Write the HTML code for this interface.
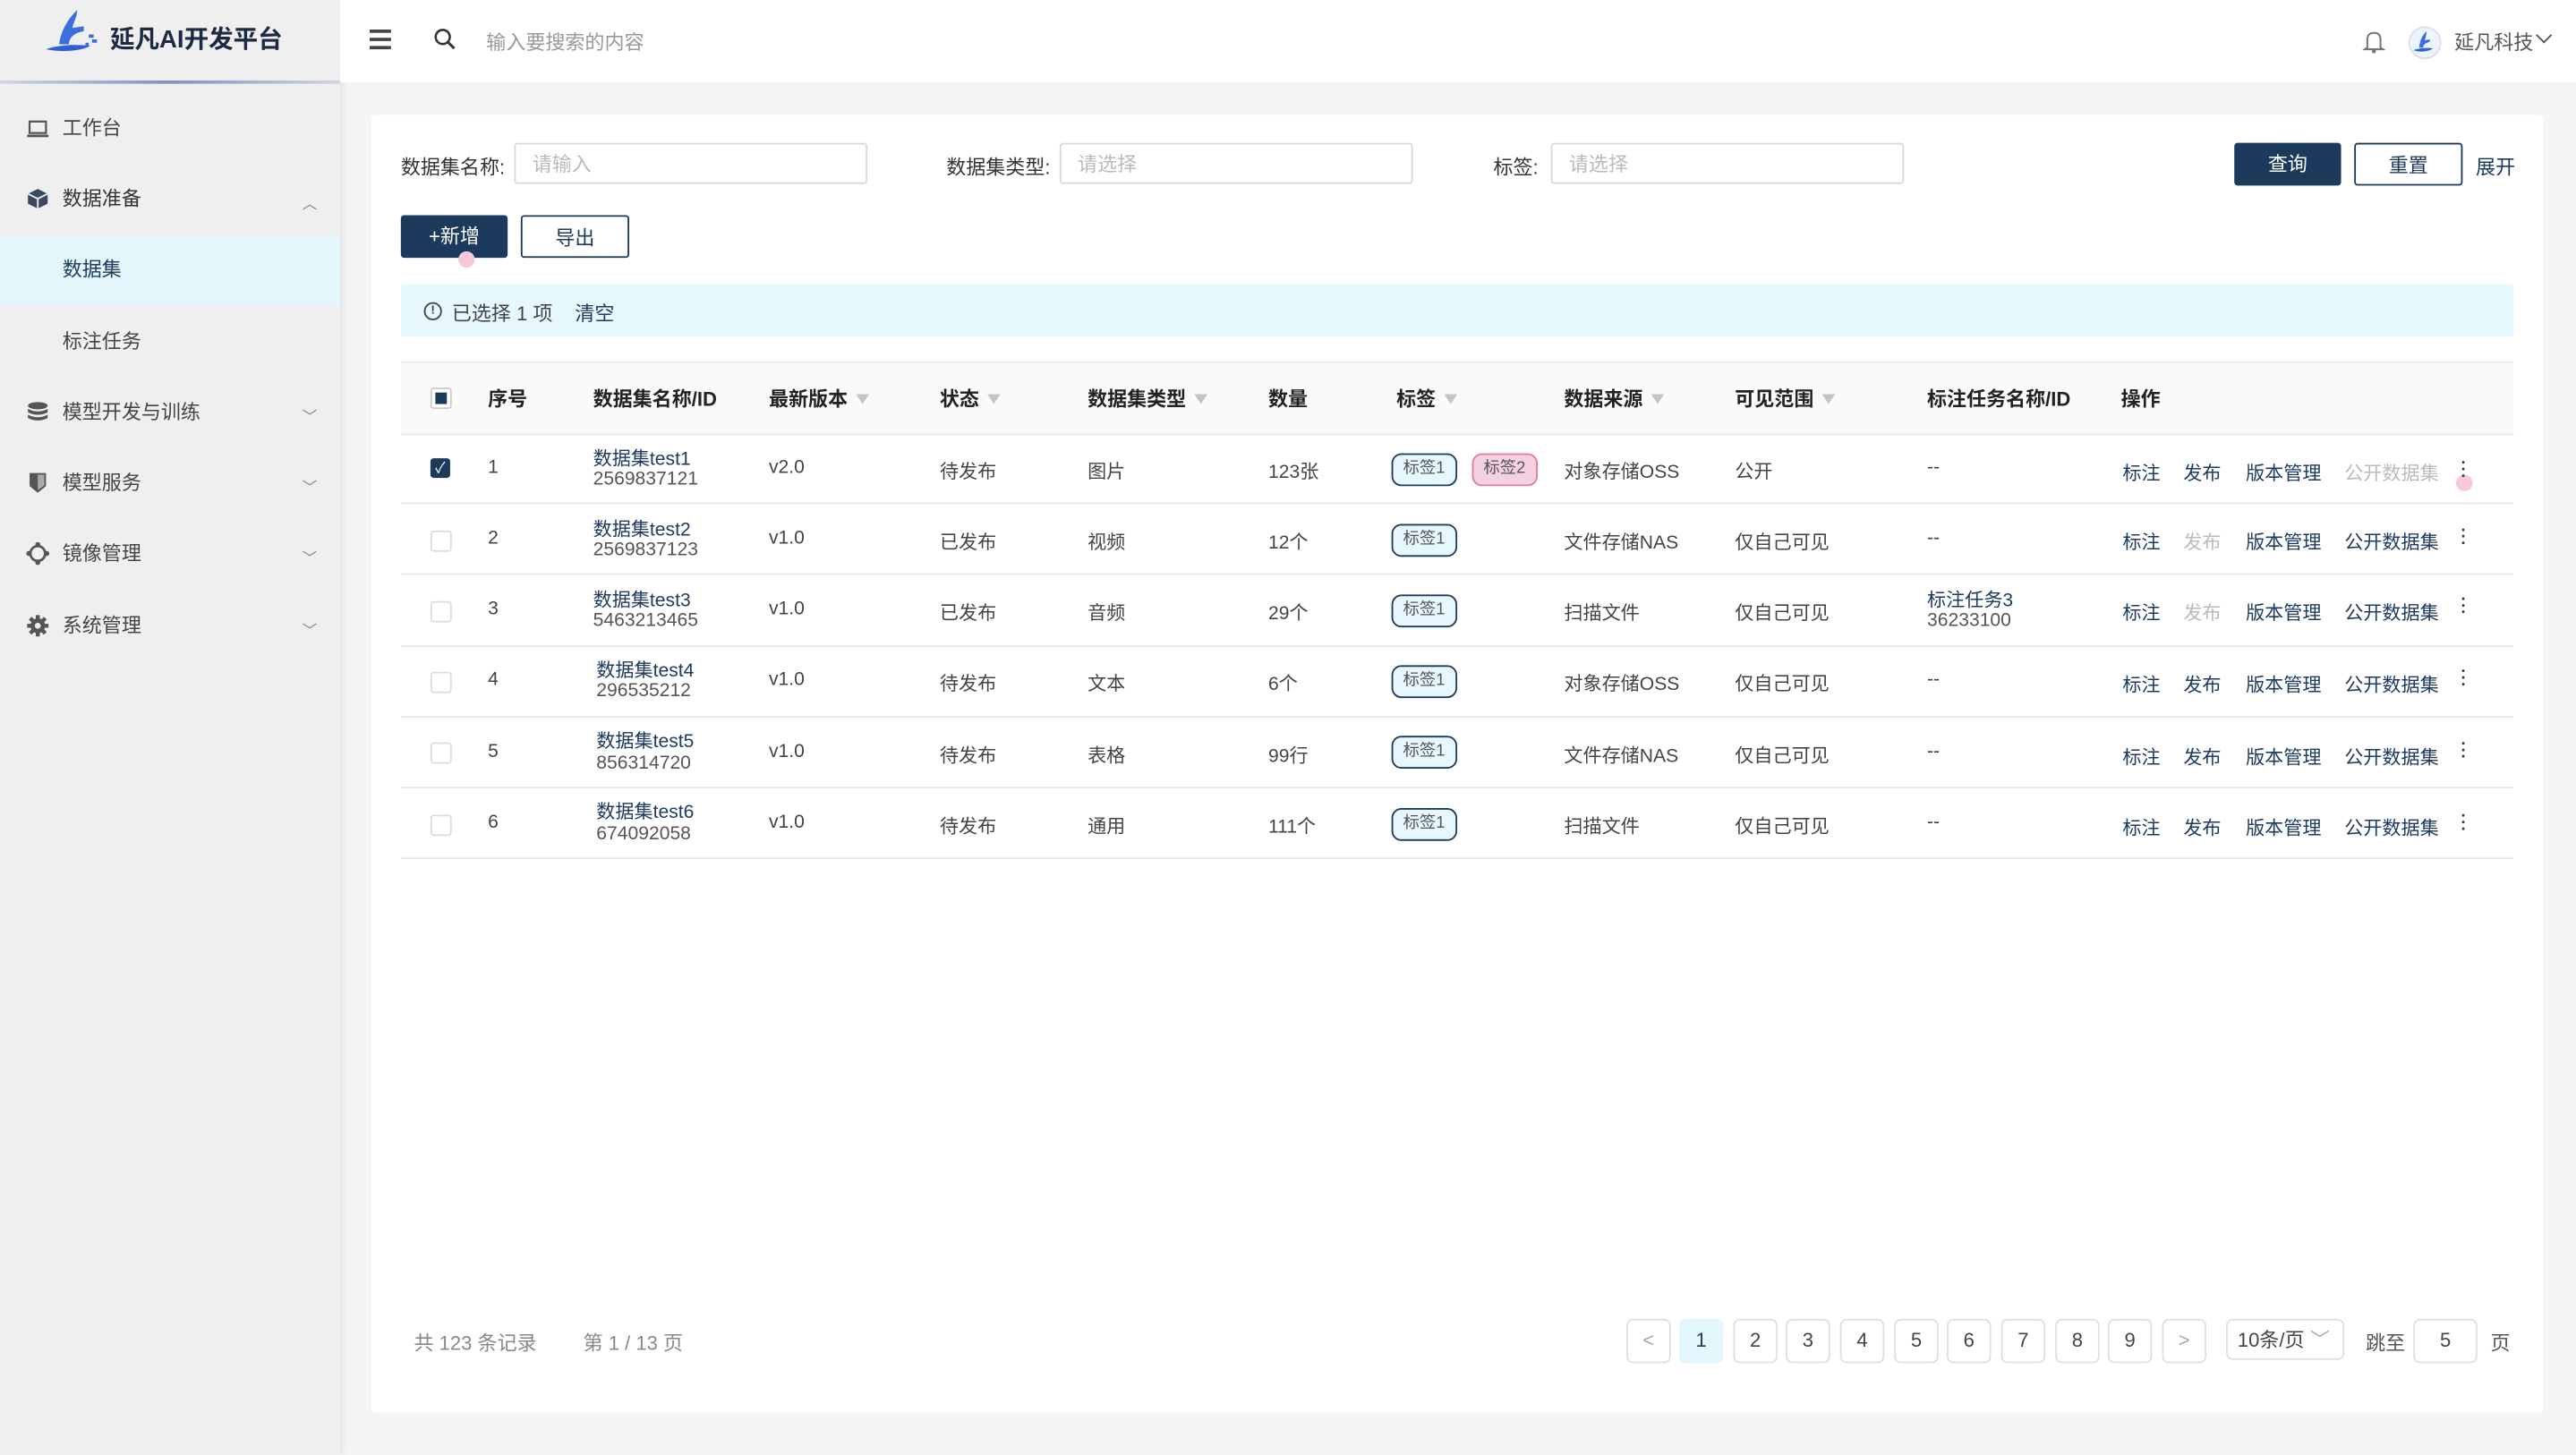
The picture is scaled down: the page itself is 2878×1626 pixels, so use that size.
<!DOCTYPE html>
<html><head><meta charset="utf-8">
<style>
html,body{margin:0;padding:0;width:2878px;height:1626px;overflow:hidden;background:#f5f5f5}
#s{position:absolute;left:0;top:0;width:1568px;height:886px;transform:scale(1.83546);transform-origin:0 0;font-family:"Liberation Sans","Noto Sans CJK SC",sans-serif;font-size:12px;color:#333;background:#f5f5f5}
.a{position:absolute;white-space:nowrap}
.side{left:0;top:0;width:207px;height:886px;background:#efefef;box-shadow:2px 0 4px rgba(0,0,0,.08)}
.mi{position:absolute;left:0;width:207px;height:43px;line-height:43px;color:#444;font-size:12px}
.mi span{position:absolute;left:38px}
.mi .ic{position:absolute;left:16px;top:14px;width:14px;height:14px}
.mi .ch{position:absolute;left:184px;top:3px;color:#888;font-size:9px}
.hdr{left:207px;top:0;width:1361px;height:50px;background:#fff}
.card{left:226px;top:70px;width:1322px;height:790px;background:#fff;border-radius:3px}
.inp{position:absolute;height:25px;border:1px solid #d9d9d9;border-radius:2px;background:#fff;color:#bbb;line-height:25px;padding-left:10px;box-sizing:border-box}
.btn{position:absolute;height:26px;line-height:26px;text-align:center;border-radius:2px;box-sizing:border-box}
.th{font-weight:bold;color:#222;top:234px}
.f{display:inline-block;width:0;height:0;border-left:4px solid transparent;border-right:4px solid transparent;border-top:6px solid #c4c4c4;margin-left:5px;vertical-align:1px}
.row{position:absolute;left:244px;width:1286px;border-bottom:1px solid #e8e8e8}
.rt{font-size:11.5px;color:#444}
.lk{color:#1d3a5f!important}
.dis{color:#bbb!important}
.tag{position:absolute;height:18px;line-height:18px;padding:0 6px;border:1px solid #1d3a5f;border-radius:6px;background:#e6f7fd;font-size:10px;color:#555}
.tag2{border-color:#e27aa6;background:#f3d1e0}
.cb{position:absolute;left:262px;width:11px;height:11px;border:1px solid #ddd;border-radius:2px;background:#fff}
.pg{position:absolute;top:803px;width:25px;height:25px;border:1px solid #e0e0e0;border-radius:4px;text-align:center;line-height:25px;color:#444;background:#fff}
.dots{position:absolute;width:2px;color:#1d3a5f;font-weight:bold;line-height:4px;font-size:10px}
</style></head><body><div id="s">

<div class="a side">
  <svg class="a" style="left:27px;top:5px" width="34" height="28" viewBox="0 0 34 28">
    <path d="M20 1 C14 7 10 14 9 22 L15 22 C15 18 18 15 24 14 L24 11 L17 12 C18 8 20 5 20 1Z" fill="#3b6fe0"/>
    <path d="M1 25 C10 22 20 22 28 23 C22 26 12 27 1 25Z" fill="#2f5fd6"/>
    <rect x="27" y="16" width="3" height="2" fill="#3b6fe0"/><rect x="29" y="19" width="3" height="2" fill="#3b6fe0"/><rect x="25" y="21" width="2" height="2" fill="#3b6fe0"/>
  </svg>
  <div class="a" style="left:67px;top:13px;font-size:15px;font-weight:bold;color:#1d2a44">延凡AI开发平台</div>
  <div class="a" style="left:0;top:49px;width:207px;height:2px;background:linear-gradient(90deg,#d0d6e2,#7c93bd,#d0d6e2)"></div>

  <div class="mi" style="top:57px"><svg class="ic" viewBox="0 0 14 14"><rect x="2" y="3" width="10" height="7" fill="none" stroke="#555" stroke-width="1.2"/><rect x="0.5" y="11" width="13" height="1.5" fill="#555"/></svg><span>工作台</span></div>
  <div class="mi" style="top:100px;color:#333"><svg class="ic" viewBox="0 0 14 14"><path d="M7 1 L13 4 L13 10 L7 13 L1 10 L1 4Z" fill="#3a4a5e"/><path d="M1 4 L7 7 L13 4 M7 7 L7 13" stroke="#efefef" stroke-width="1" fill="none"/></svg><span>数据准备</span><span class="ch" style="left:184px">︿</span></div>
  <div class="mi" style="top:143px;background:#e3f6fc;color:#1d3a5f"><span>数据集</span></div>
  <div class="mi" style="top:187px"><span>标注任务</span></div>
  <div class="mi" style="top:230px"><svg class="ic" viewBox="0 0 14 14"><ellipse cx="7" cy="3" rx="6" ry="2.2" fill="#555"/><path d="M1 5 Q7 8 13 5 L13 7 Q7 10 1 7Z M1 8.5 Q7 11.5 13 8.5 L13 10.5 Q7 13.5 1 10.5Z" fill="#555"/></svg><span>模型开发与训练</span><span class="ch">﹀</span></div>
  <div class="mi" style="top:273px"><svg class="ic" viewBox="0 0 14 14"><path d="M2 1 L12 1 L12 9 L7 13 L2 9Z" fill="#555"/><path d="M7 2 L11 2 L11 8.5 L7 11.5Z" fill="#aaa"/></svg><span>模型服务</span><span class="ch">﹀</span></div>
  <div class="mi" style="top:316px"><svg class="ic" viewBox="0 0 14 14"><circle cx="7" cy="7" r="4.5" fill="none" stroke="#555" stroke-width="1.5"/><circle cx="7" cy="1.5" r="1.5" fill="#555"/><circle cx="7" cy="12.5" r="1.5" fill="#555"/><circle cx="1.5" cy="7" r="1.5" fill="#555"/><circle cx="12.5" cy="7" r="1.5" fill="#555"/></svg><span>镜像管理</span><span class="ch">﹀</span></div>
  <div class="mi" style="top:360px"><svg class="ic" viewBox="0 0 14 14"><circle cx="7" cy="7" r="4.5" fill="#555"/><g stroke="#555" stroke-width="2.4"><path d="M7 0.5V13.5M0.5 7H13.5M2.4 2.4L11.6 11.6M11.6 2.4L2.4 11.6"/></g><circle cx="7" cy="7" r="1.8" fill="#efefef"/></svg><span>系统管理</span><span class="ch">﹀</span></div>
</div>

<div class="a hdr">
  <div class="a" style="left:18px;top:18px;width:13px;height:2px;background:#444;box-shadow:0 5px 0 #444,0 10px 0 #444"></div>
  <svg class="a" style="left:57px;top:17px" width="14" height="14" viewBox="0 0 14 14"><circle cx="5.5" cy="5.5" r="4.3" fill="none" stroke="#333" stroke-width="1.4"/><path d="M8.7 8.7 L12.5 12.5" stroke="#333" stroke-width="1.6"/></svg>
  <div class="a" style="left:89px;top:17px;color:#999">输入要搜索的内容</div>
  <svg class="a" style="left:1231px;top:18px" width="14" height="15" viewBox="0 0 14 15"><path d="M3 11 L3 6 Q3 2 7 2 Q11 2 11 6 L11 11 L12.5 12 L1.5 12Z" fill="none" stroke="#777" stroke-width="1.1"/><circle cx="7" cy="13.3" r="1.2" fill="#777"/></svg>
  <div class="a" style="left:1259px;top:16px;width:18px;height:18px;border-radius:50%;background:#eef4fb;border:1px solid #dde"></div>
  <svg class="a" style="left:1261px;top:18px" width="15" height="15" viewBox="0 0 15 15"><path d="M9 1 C6 4 5 7 4.5 11 L7 11 C7 9 9 8 11 7.5 L11 6 L8 6.5 C8.5 4.5 9 3 9 1Z" fill="#3b6fe0"/><path d="M1 12.5 C6 11 10 11 13 11.5 C10 13.5 5 14 1 12.5Z" fill="#2f5fd6"/></svg>
  <div class="a" style="left:1287px;top:17px;color:#555">延凡科技</div>
  <div class="a" style="left:1338px;top:18px;width:6px;height:6px;border-right:1.3px solid #555;border-bottom:1.3px solid #555;transform:rotate(45deg)"></div>
</div>

<div class="a card"></div>
<div class="a" style="left:244px;top:93px;color:#333">数据集名称:</div>
<div class="inp" style="left:313px;top:87px;width:215px">请输入</div>
<div class="a" style="left:576px;top:93px;color:#333">数据集类型:</div>
<div class="inp" style="left:645px;top:87px;width:215px">请选择</div>
<div class="a" style="left:909px;top:93px;color:#333">标签:</div>
<div class="inp" style="left:944px;top:87px;width:215px">请选择</div>
<div class="btn" style="left:1360px;top:87px;width:65px;background:#1b3a5c;color:#fff">查询</div>
<div class="btn" style="left:1433px;top:87px;width:66px;border:1px solid #1b3a5c;color:#1b3a5c;background:#fff">重置</div>
<div class="a" style="left:1507px;top:93px;color:#1b3a5c">展开</div>

<div class="btn" style="left:244px;top:131px;width:65px;background:#1b3a5c;color:#fff">+新增</div>
<div class="btn" style="left:317px;top:131px;width:66px;border:1px solid #1b3a5c;color:#1b3a5c;background:#fff">导出</div>
<div class="a" style="left:279px;top:153px;width:10px;height:10px;border-radius:50%;background:#f6c9d8"></div>

<div class="a" style="left:244px;top:173px;width:1286px;height:32px;background:#e6f7fd;border-radius:2px"></div>
<div class="a" style="left:258px;top:184px;width:9px;height:9px;border:1.1px solid #444;border-radius:50%;font-size:7px;line-height:9px;text-align:center;font-weight:bold">!</div>
<div class="a" style="left:275px;top:182px;color:#444">已选择 1 项</div>
<div class="a" style="left:350px;top:182px;color:#1d3a5f">清空</div>

<div class="a" style="left:244px;top:220px;width:1286px;height:43px;background:#fafafa;border-top:1px solid #eee;border-bottom:1px solid #e8e8e8"></div>
<div class="cb" style="top:236px;border-color:#ccc"></div><div class="a" style="left:265px;top:239px;width:7px;height:7px;background:#1b3a5c"></div>
<div class="a th" style="left:297px">序号</div>
<div class="a th" style="left:361px">数据集名称/ID</div>
<div class="a th" style="left:468px">最新版本<i class="f"></i></div>
<div class="a th" style="left:572px">状态<i class="f"></i></div>
<div class="a th" style="left:662px">数据集类型<i class="f"></i></div>
<div class="a th" style="left:772px">数量</div>
<div class="a th" style="left:850px">标签<i class="f"></i></div>
<div class="a th" style="left:952px">数据来源<i class="f"></i></div>
<div class="a th" style="left:1056px">可见范围<i class="f"></i></div>
<div class="a th" style="left:1173px">标注任务名称/ID</div>
<div class="a th" style="left:1291px">操作</div>

<div class="row" style="top:264px;height:42px"></div>
<div class="a" style="left:262px;top:279px;width:12px;height:12px;background:#1b3a5c;border-radius:2px;color:#fff;font-size:9px;line-height:12px;text-align:center">✓</div>
<div class="a rt" style="left:297px;top:279px">1</div>
<div class="a lk rt" style="left:361px;top:271px">数据集test1</div><div class="a rt" style="left:361px;top:286px;color:#555">2569837121</div>
<div class="a rt" style="left:468px;top:279px">v2.0</div><div class="a rt" style="left:572px;top:279px">待发布</div><div class="a rt" style="left:662px;top:279px">图片</div><div class="a rt" style="left:772px;top:279px">123张</div>
<div class="tag" style="left:847px;top:276px">标签1</div><div class="tag tag2" style="left:896px;top:276px">标签2</div>
<div class="a rt" style="left:952px;top:279px">对象存储OSS</div><div class="a rt" style="left:1056px;top:279px">公开</div><div class="a rt" style="left:1173px;top:279px">--</div>
<div class="a lk rt" style="left:1292px;top:280px">标注</div><div class="a lk rt" style="left:1329px;top:280px">发布</div><div class="a lk rt" style="left:1367px;top:280px">版本管理</div><div class="a dis rt" style="left:1427px;top:280px">公开数据集</div>

<div class="row" style="top:307px;height:42px"></div>
<div class="cb" style="top:323px"></div>
<div class="a rt" style="left:297px;top:322px">2</div>
<div class="a lk rt" style="left:361px;top:314px">数据集test2</div><div class="a rt" style="left:361px;top:329px;color:#555">2569837123</div>
<div class="a rt" style="left:468px;top:322px">v1.0</div><div class="a rt" style="left:572px;top:322px">已发布</div><div class="a rt" style="left:662px;top:322px">视频</div><div class="a rt" style="left:772px;top:322px">12个</div>
<div class="tag" style="left:847px;top:319px">标签1</div>
<div class="a rt" style="left:952px;top:322px">文件存储NAS</div><div class="a rt" style="left:1056px;top:322px">仅自己可见</div><div class="a rt" style="left:1173px;top:322px">--</div>
<div class="a lk rt" style="left:1292px;top:322px">标注</div><div class="a dis rt" style="left:1329px;top:322px">发布</div><div class="a lk rt" style="left:1367px;top:322px">版本管理</div><div class="a lk rt" style="left:1427px;top:322px">公开数据集</div>

<div class="row" style="top:350px;height:43px"></div>
<div class="cb" style="top:366px"></div>
<div class="a rt" style="left:297px;top:365px">3</div>
<div class="a lk rt" style="left:361px;top:357px">数据集test3</div><div class="a rt" style="left:361px;top:372px;color:#555">5463213465</div>
<div class="a rt" style="left:468px;top:365px">v1.0</div><div class="a rt" style="left:572px;top:365px">已发布</div><div class="a rt" style="left:662px;top:365px">音频</div><div class="a rt" style="left:772px;top:365px">29个</div>
<div class="tag" style="left:847px;top:362px">标签1</div>
<div class="a rt" style="left:952px;top:365px">扫描文件</div><div class="a rt" style="left:1056px;top:365px">仅自己可见</div>
<div class="a lk rt" style="left:1173px;top:357px">标注任务3</div><div class="a rt" style="left:1173px;top:372px;color:#555">36233100</div>
<div class="a lk rt" style="left:1292px;top:365px">标注</div><div class="a dis rt" style="left:1329px;top:365px">发布</div><div class="a lk rt" style="left:1367px;top:365px">版本管理</div><div class="a lk rt" style="left:1427px;top:365px">公开数据集</div>

<div class="row" style="top:394px;height:42px"></div>
<div class="cb" style="top:409px"></div>
<div class="a rt" style="left:297px;top:408px">4</div>
<div class="a lk rt" style="left:363px;top:400px">数据集test4</div><div class="a rt" style="left:363px;top:415px;color:#555">296535212</div>
<div class="a rt" style="left:468px;top:408px">v1.0</div><div class="a rt" style="left:572px;top:408px">待发布</div><div class="a rt" style="left:662px;top:408px">文本</div><div class="a rt" style="left:772px;top:408px">6个</div>
<div class="tag" style="left:847px;top:405px">标签1</div>
<div class="a rt" style="left:952px;top:408px">对象存储OSS</div><div class="a rt" style="left:1056px;top:408px">仅自己可见</div><div class="a rt" style="left:1173px;top:408px">--</div>
<div class="a lk rt" style="left:1292px;top:409px">标注</div><div class="a lk rt" style="left:1329px;top:409px">发布</div><div class="a lk rt" style="left:1367px;top:409px">版本管理</div><div class="a lk rt" style="left:1427px;top:409px">公开数据集</div>

<div class="row" style="top:437px;height:42px"></div>
<div class="cb" style="top:452px"></div>
<div class="a rt" style="left:297px;top:452px">5</div>
<div class="a lk rt" style="left:363px;top:443px">数据集test5</div><div class="a rt" style="left:363px;top:459px;color:#555">856314720</div>
<div class="a rt" style="left:468px;top:452px">v1.0</div><div class="a rt" style="left:572px;top:452px">待发布</div><div class="a rt" style="left:662px;top:452px">表格</div><div class="a rt" style="left:772px;top:452px">99行</div>
<div class="tag" style="left:847px;top:448px">标签1</div>
<div class="a rt" style="left:952px;top:452px">文件存储NAS</div><div class="a rt" style="left:1056px;top:452px">仅自己可见</div><div class="a rt" style="left:1173px;top:452px">--</div>
<div class="a lk rt" style="left:1292px;top:453px">标注</div><div class="a lk rt" style="left:1329px;top:453px">发布</div><div class="a lk rt" style="left:1367px;top:453px">版本管理</div><div class="a lk rt" style="left:1427px;top:453px">公开数据集</div>

<div class="row" style="top:480px;height:42px"></div>
<div class="cb" style="top:496px"></div>
<div class="a rt" style="left:297px;top:495px">6</div>
<div class="a lk rt" style="left:363px;top:486px">数据集test6</div><div class="a rt" style="left:363px;top:502px;color:#555">674092058</div>
<div class="a rt" style="left:468px;top:495px">v1.0</div><div class="a rt" style="left:572px;top:495px">待发布</div><div class="a rt" style="left:662px;top:495px">通用</div><div class="a rt" style="left:772px;top:495px">111个</div>
<div class="tag" style="left:847px;top:492px">标签1</div>
<div class="a rt" style="left:952px;top:495px">扫描文件</div><div class="a rt" style="left:1056px;top:495px">仅自己可见</div><div class="a rt" style="left:1173px;top:495px">--</div>
<div class="a lk rt" style="left:1292px;top:496px">标注</div><div class="a lk rt" style="left:1329px;top:496px">发布</div><div class="a lk rt" style="left:1367px;top:496px">版本管理</div><div class="a lk rt" style="left:1427px;top:496px">公开数据集</div>

<div class="a" style="left:1495px;top:289px;width:10px;height:10px;border-radius:50%;background:#f6c9d8"></div>
<div class="dots" style="left:1498px;top:281px">·<br>·<br>·</div>
<div class="dots" style="left:1498px;top:322px">·<br>·<br>·</div>
<div class="dots" style="left:1498px;top:364px">·<br>·<br>·</div>
<div class="dots" style="left:1498px;top:408px">·<br>·<br>·</div>
<div class="dots" style="left:1498px;top:452px">·<br>·<br>·</div>
<div class="dots" style="left:1498px;top:496px">·<br>·<br>·</div>

<div class="a" style="left:252px;top:809px;color:#888">共 123 条记录</div>
<div class="a" style="left:355px;top:809px;color:#888">第 1 / 13 页</div>
<div class="pg" style="left:990px;color:#aaa">&lt;</div>
<div class="pg" style="left:1022px;background:#e3f6fc;border-color:#e3f6fc;color:#1d3a5f">1</div>
<div class="pg" style="left:1055px">2</div>
<div class="pg" style="left:1087px">3</div>
<div class="pg" style="left:1120px">4</div>
<div class="pg" style="left:1153px">5</div>
<div class="pg" style="left:1185px">6</div>
<div class="pg" style="left:1218px">7</div>
<div class="pg" style="left:1251px">8</div>
<div class="pg" style="left:1283px">9</div>
<div class="pg" style="left:1316px;color:#aaa">&gt;</div>
<div class="pg" style="left:1355px;width:72px;text-align:left;padding-left:6px;box-sizing:border-box">10条/页 <span style="color:#aaa">﹀</span></div>
<div class="a" style="left:1440px;top:809px;color:#555">跳至</div>
<div class="pg" style="left:1469px;width:37px">5</div>
<div class="a" style="left:1516px;top:809px;color:#555">页</div>

</div></body></html>
